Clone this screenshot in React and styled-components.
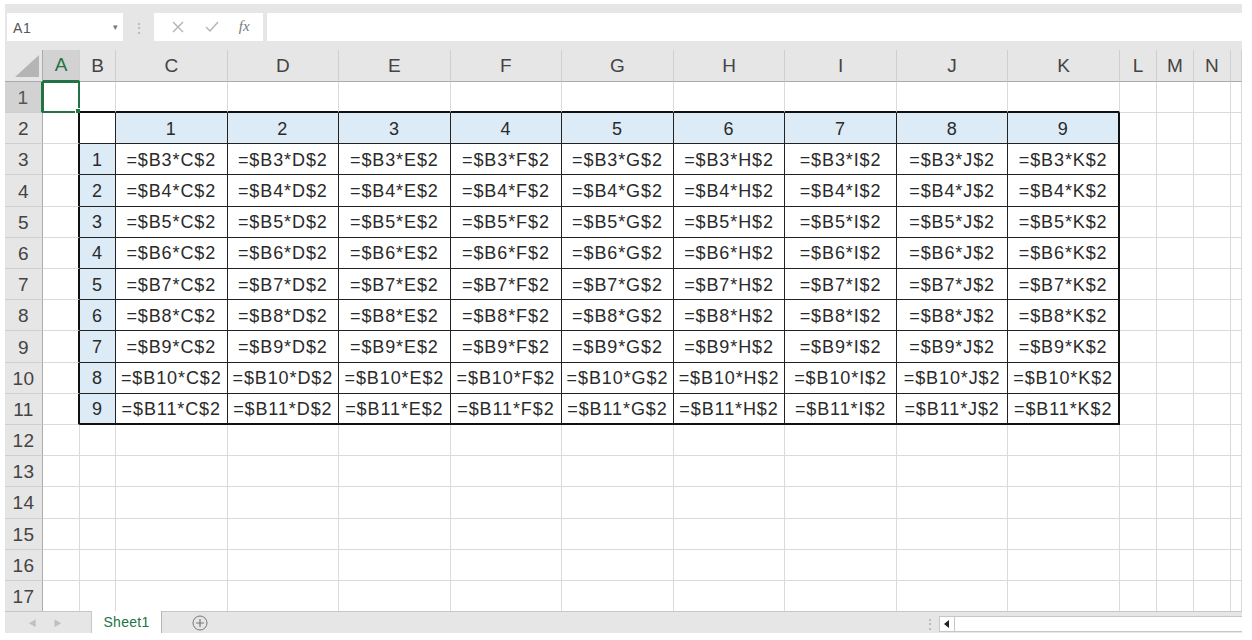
import React from 'react';
import styled, { createGlobalStyle } from 'styled-components';

const GlobalStyle = createGlobalStyle`
  html, body {
    margin: 0;
    padding: 0;
    background: #ffffff;
  }
  body {
    font-family: "Noto Sans CJK JP", "Noto Sans", sans-serif;
  }
`;

const COLS = ['A', 'B', 'C', 'D', 'E', 'F', 'G', 'H', 'I', 'J', 'K', 'L', 'M', 'N', 'O'];
const ROWS = Array.from({ length: 17 }, (_, i) => i + 1);
const TABLE_COLS = ['B', 'C', 'D', 'E', 'F', 'G', 'H', 'I', 'J', 'K'];
const GRID_LINE = '#dadada';

const cellContent = (r, c) => {
  if (r === 2 && c >= 'C' && c <= 'K') return String(c.charCodeAt(0) - 66);
  if (c === 'B' && r >= 3 && r <= 11) return String(r - 2);
  if (r >= 3 && r <= 11 && c >= 'C' && c <= 'K') return `=$B${r}*${c}$2`;
  return '';
};

const cellStyle = (r, c) => {
  const inTableCols = TABLE_COLS.includes(c);
  let bottom = `1px solid ${GRID_LINE}`;
  let right = `1px solid ${GRID_LINE}`;
  if (inTableCols && r >= 1 && r <= 11) {
    bottom = r === 1 || r === 11 ? '2px solid #111' : '1px solid #222';
  }
  if (r >= 2 && r <= 11 && (c === 'A' || inTableCols)) {
    right = c === 'A' || c === 'K' ? '2px solid #111' : '1px solid #222';
  }
  const blue =
    (r === 2 && c >= 'C' && c <= 'K') || (c === 'B' && r >= 3 && r <= 11);
  return { bottom, right, bg: blue ? '#ddebf7' : '#ffffff' };
};

export default function App() {
  return (
    <>
      <GlobalStyle />
      <Page>
        <FormulaBar>
          <NameBox>
            <span>A1</span>
            <Caret>▾</Caret>
          </NameBox>
          <Grip>⋮</Grip>
          <FxBox>
            <svg width="14" height="14" viewBox="0 0 14 14">
              <path d="M2 2 L12 12 M12 2 L2 12" stroke="#b3b3b3" strokeWidth="1.4" fill="none" />
            </svg>
            <svg width="16" height="14" viewBox="0 0 16 14">
              <path d="M2 7 L6 11 L14 2" stroke="#b3b3b3" strokeWidth="1.4" fill="none" />
            </svg>
            <Fx>fx</Fx>
          </FxBox>
          <FormulaInput />
        </FormulaBar>

        <Sheet>
          <Corner>
            <svg width="26" height="24" viewBox="0 0 26 24">
              <path d="M25 1 L25 23 L1 23 Z" fill="#b5b5b5" />
            </svg>
          </Corner>
          {COLS.map((c) => (
            <ColHeader key={c} $active={c === 'A'}>
              {c === 'O' ? '' : c}
            </ColHeader>
          ))}
          {ROWS.map((r) => (
            <React.Fragment key={r}>
              <RowHeader $active={r === 1}>{r}</RowHeader>
              {COLS.map((c) => {
                const s = cellStyle(r, c);
                return (
                  <Cell
                    key={c + r}
                    $bottom={s.bottom}
                    $right={s.right}
                    $bg={s.bg}
                  >
                    {cellContent(r, c)}
                    {r === 1 && c === 'A' && (
                      <Selection>
                        <Handle />
                      </Selection>
                    )}
                  </Cell>
                );
              })}
            </React.Fragment>
          ))}
        </Sheet>

        <TabBar>
          <TabNav>
            <span>◀</span>
            <span>▶</span>
          </TabNav>
          <SheetTab>Sheet1</SheetTab>
          <AddSheet>
            <svg width="16" height="16" viewBox="0 0 16 16">
              <circle cx="8" cy="8" r="7" stroke="#777" strokeWidth="1" fill="none" />
              <path d="M8 4 L8 12 M4 8 L12 8" stroke="#777" strokeWidth="1.2" />
            </svg>
          </AddSheet>
          <Spacer />
          <BarGrip>⋮</BarGrip>
          <HScroll>
            <ScrollBtn>
              <svg width="6" height="8" viewBox="0 0 6 8">
                <path d="M5 0 L5 8 L0 4 Z" fill="#222" />
              </svg>
            </ScrollBtn>
          </HScroll>
        </TabBar>
      </Page>
    </>
  );
}

const Page = styled.div`
  width: 1252px;
  height: 640px;
  box-sizing: border-box;
  padding: 4px 10px 7px 5px;
  display: flex;
  flex-direction: column;
  background: #fff;
  overflow: hidden;
`;

const FormulaBar = styled.div`
  height: 46px;
  background: #e6e6e6;
  display: flex;
  align-items: center;
  padding: 0 0 0 2px;
  gap: 0;
`;

const NameBox = styled.div`
  width: 116px;
  height: 28px;
  box-sizing: border-box;
  background: #fff;
  display: flex;
  align-items: center;
  justify-content: space-between;
  padding: 0 4px 0 6px;
  font-family: "Liberation Sans", Arial, sans-serif;
  font-size: 14px;
  letter-spacing: 0.6px;
  color: #555;
  span:first-child {
    padding-top: 3px;
  }
`;

const Caret = styled.span`
  font-size: 9px;
  color: #777;
`;

const Grip = styled.div`
  width: 31px;
  text-align: center;
  color: #b0b0b0;
  font-size: 14px;
`;

const FxBox = styled.div`
  width: 109px;
  height: 28px;
  box-sizing: border-box;
  background: #fff;
  display: flex;
  align-items: center;
  justify-content: space-around;
  padding: 0 4px 0 8px;
`;

const Fx = styled.span`
  font-family: "Liberation Serif", serif;
  font-style: italic;
  font-size: 15px;
  color: #777;
`;

const FormulaInput = styled.div`
  flex: 1;
  height: 28px;
  margin-left: 4px;
  background: #fff;
`;

const Sheet = styled.div`
  display: grid;
  grid-template-columns: 38px 37px 36px repeat(9, 111.56px) 37px 37px 37px 11px;
  grid-template-rows: 32px repeat(17, 31.2px);
  overflow: hidden;
  background: #fff;
`;

const Corner = styled.div`
  background: #e6e6e6;
  border-right: 1px solid #ababab;
  border-bottom: 1px solid #ababab;
  display: flex;
  align-items: flex-end;
  justify-content: flex-end;
  padding: 0 2px 3px 0;
`;

const ColHeader = styled.div`
  box-sizing: border-box;
  background: ${(p) => (p.$active ? '#d2d2d2' : '#e6e6e6')};
  color: ${(p) => (p.$active ? '#217346' : '#444')};
  border-right: 1px solid #cfcfcf;
  border-bottom: ${(p) => (p.$active ? '2px solid #217346' : '1px solid #ababab')};
  display: flex;
  align-items: center;
  justify-content: center;
  padding-top: 1px;
  font-family: "Liberation Sans", Arial, sans-serif;
  font-size: 19px;
  overflow: hidden;
`;

const RowHeader = styled.div`
  box-sizing: border-box;
  background: ${(p) => (p.$active ? '#d2d2d2' : '#e6e6e6')};
  color: ${(p) => (p.$active ? '#555' : '#444')};
  border-right: ${(p) => (p.$active ? '2px solid #217346' : '1px solid #ababab')};
  border-bottom: 1px solid #cfcfcf;
  display: flex;
  align-items: center;
  justify-content: center;
  padding-top: 2px;
  font-family: "Liberation Sans", Arial, sans-serif;
  font-size: 19px;
  letter-spacing: 0.5px;
`;

const Cell = styled.div`
  position: relative;
  box-sizing: border-box;
  background: ${(p) => p.$bg};
  border-right: ${(p) => p.$right};
  border-bottom: ${(p) => p.$bottom};
  display: flex;
  align-items: center;
  justify-content: center;
  padding-top: 2px;
  font-family: "Liberation Sans", Arial, sans-serif;
  font-size: 18px;
  letter-spacing: 0.9px;
  color: #2a2a2a;
  white-space: nowrap;
  overflow: visible;
`;

const Selection = styled.div`
  position: absolute;
  inset: -1px -1px -1px -1px;
  border: 2px solid #217346;
  pointer-events: none;
`;

const Handle = styled.div`
  position: absolute;
  right: -4px;
  bottom: -4px;
  width: 5px;
  height: 5px;
  background: #217346;
  border: 1px solid #fff;
`;

const TabBar = styled.div`
  height: 21px;
  background: #e6e6e6;
  border-top: 1px solid #c6c6c6;
  display: flex;
  align-items: stretch;
`;

const TabNav = styled.div`
  width: 87px;
  display: flex;
  align-items: center;
  justify-content: center;
  gap: 17px;
  font-size: 8px;
  color: #c0c0c0;
  border-right: 1px solid #c6c6c6;
  padding-right: 6px;
  box-sizing: border-box;
`;

const SheetTab = styled.div`
  width: 69px;
  margin-top: -1px;
  background: #fff;
  border-right: 1px solid #b5b5b5;
  color: #217346;
  font-family: "Liberation Sans", Arial, sans-serif;
  font-size: 14px;
  letter-spacing: 0.3px;
  display: flex;
  align-items: center;
  justify-content: center;
`;

const AddSheet = styled.div`
  width: 76px;
  display: flex;
  align-items: center;
  justify-content: center;
`;

const Spacer = styled.div`
  flex: 1;
`;

const BarGrip = styled.div`
  width: 18px;
  display: flex;
  align-items: center;
  justify-content: center;
  color: #a8a8a8;
  font-size: 12px;
`;

const HScroll = styled.div`
  width: 302px;
  margin: 4px 0 1px 0;
  background: #fff;
  border: 1px solid #c6c6c6;
  border-right: none;
  display: flex;
`;

const ScrollBtn = styled.div`
  width: 14px;
  border-right: 1px solid #c6c6c6;
  display: flex;
  align-items: center;
  justify-content: center;
`;
